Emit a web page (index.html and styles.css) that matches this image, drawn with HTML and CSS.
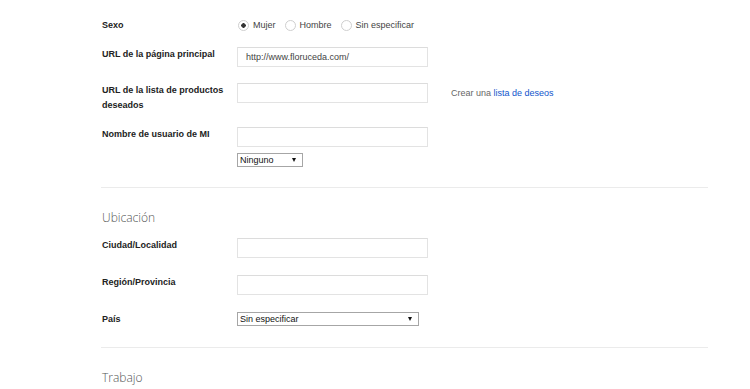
FILE: index.html
```html
<!DOCTYPE html>
<html lang="es">
<head>
    <meta charset="UTF-8">
    <meta name="viewport" content="width=device-width, initial-scale=1.0">
    <title>Perfil</title>
    <link rel="stylesheet" href="styles.css">
</head>
<body>
    <div class="perfil">
        <div class="seccion primera">
            <div class="fila fila-sexo">
                <div class="etiqueta">Sexo</div>
                <div class="campo radios">
                    <label class="opcion"><input type="radio" name="sexo" checked> Mujer</label>
                    <label class="opcion"><input type="radio" name="sexo"> Hombre</label>
                    <label class="opcion"><input type="radio" name="sexo"> Sin especificar</label>
                </div>
            </div>
            <div class="fila">
                <label class="etiqueta" for="url">URL de la página principal</label>
                <div class="campo">
                    <input class="texto" type="text" id="url" value="http://www.floruceda.com/">
                </div>
            </div>
            <div class="fila fila-deseos">
                <label class="etiqueta" for="deseos">URL de la lista de productos deseados</label>
                <div class="campo con-nota">
                    <input class="texto" type="text" id="deseos">
                    <span class="nota">Crear una <a href="#">lista de deseos</a></span>
                </div>
            </div>
            <div class="fila">
                <label class="etiqueta" for="mi">Nombre de usuario de MI</label>
                <div class="campo apilado">
                    <input class="texto" type="text" id="mi">
                    <div class="selector corto">
                        <select>
                            <option>Ninguno</option>
                        </select>
                    </div>
                </div>
            </div>
        </div>

        <div class="seccion ubicacion">
            <h2>Ubicación</h2>
            <div class="fila">
                <label class="etiqueta" for="ciudad">Ciudad/Localidad</label>
                <div class="campo">
                    <input class="texto" type="text" id="ciudad">
                </div>
            </div>
            <div class="fila">
                <label class="etiqueta" for="region">Región/Provincia</label>
                <div class="campo">
                    <input class="texto" type="text" id="region">
                </div>
            </div>
            <div class="fila">
                <label class="etiqueta" for="pais">País</label>
                <div class="campo">
                    <div class="selector largo">
                        <select id="pais">
                            <option>Sin especificar</option>
                        </select>
                    </div>
                </div>
            </div>
        </div>

        <div class="seccion">
            <h2>Trabajo</h2>
        </div>
    </div>
</body>
</html>
```

FILE: styles.css
```css
body {
    margin: 0;
    padding: 0;
    background: #fff;
    font-family: "Liberation Sans", Arial, sans-serif;
    font-size: 9px;
    color: #222;
}
.perfil {
    width: 607px;
    margin-left: 101px;
}
.seccion {
    border-bottom: 1px solid #ebebeb;
    padding-bottom: 20px;
}
.seccion.primera {
    padding-top: 18px;
}
.seccion:last-child {
    border-bottom: none;
}
.seccion h2 {
    margin: 21px 0 12px 1px;
    font-family: "Open Sans", sans-serif;
    font-weight: 300;
    font-size: 12px;
    line-height: 17px;
    color: #555;
}
.fila {
    display: flex;
    align-items: flex-start;
    margin-bottom: 16px;
}
.ubicacion .fila {
    margin-bottom: 17px;
}
.seccion .fila:last-child {
    margin-bottom: 0;
}
.etiqueta {
    width: 135px;
    padding-left: 1px;
    font-weight: bold;
    line-height: 15px;
}
.fila-sexo {
    margin-bottom: 15px;
}
.fila-sexo .etiqueta {
    line-height: 14px;
}
.fila-deseos {
    margin-bottom: 14px;
}
.campo {
    display: flex;
    align-items: center;
}
.apilado {
    flex-direction: column;
    align-items: flex-start;
    gap: 6px;
}
.con-nota {
    gap: 23px;
}
.radios {
    gap: 8px;
    height: 14px;
}
.opcion {
    display: flex;
    align-items: center;
    gap: 4px;
    color: #444;
}
.opcion input {
    appearance: none;
    margin: 0 0 0 1px;
    width: 11px;
    height: 11px;
    border: 1px solid #cfcfcf;
    border-radius: 50%;
    background: #fff;
}
.opcion input:checked {
    background: radial-gradient(circle, #333 0, #333 2px, #fff 2.5px);
}
.texto {
    box-sizing: border-box;
    width: 191px;
    height: 20px;
    margin: 0;
    padding: 0 8px;
    border: 1px solid #e3e3e3;
    border-top-color: #dcdcdc;
    font-family: "Liberation Sans", Arial, sans-serif;
    font-size: 9px;
    color: #444;
    outline: none;
}
.nota {
    color: #666;
}
.nota a {
    color: #1155cc;
    text-decoration: none;
}
.selector {
    position: relative;
}
.selector select {
    appearance: none;
    box-sizing: border-box;
    display: block;
    height: 14px;
    margin: 0;
    padding: 0 0 0 2px;
    border: 1px solid #a6a6a6;
    border-radius: 0;
    background: #fff;
    font-family: "Liberation Sans", Arial, sans-serif;
    font-size: 9px;
    line-height: 12px;
    color: #111;
}
.selector::after {
    content: "";
    position: absolute;
    top: 5px;
    right: 7px;
    border-left: 2.5px solid transparent;
    border-right: 2.5px solid transparent;
    border-top: 4px solid #111;
}
.corto select {
    width: 66px;
}
.largo select {
    width: 182px;
}
```
